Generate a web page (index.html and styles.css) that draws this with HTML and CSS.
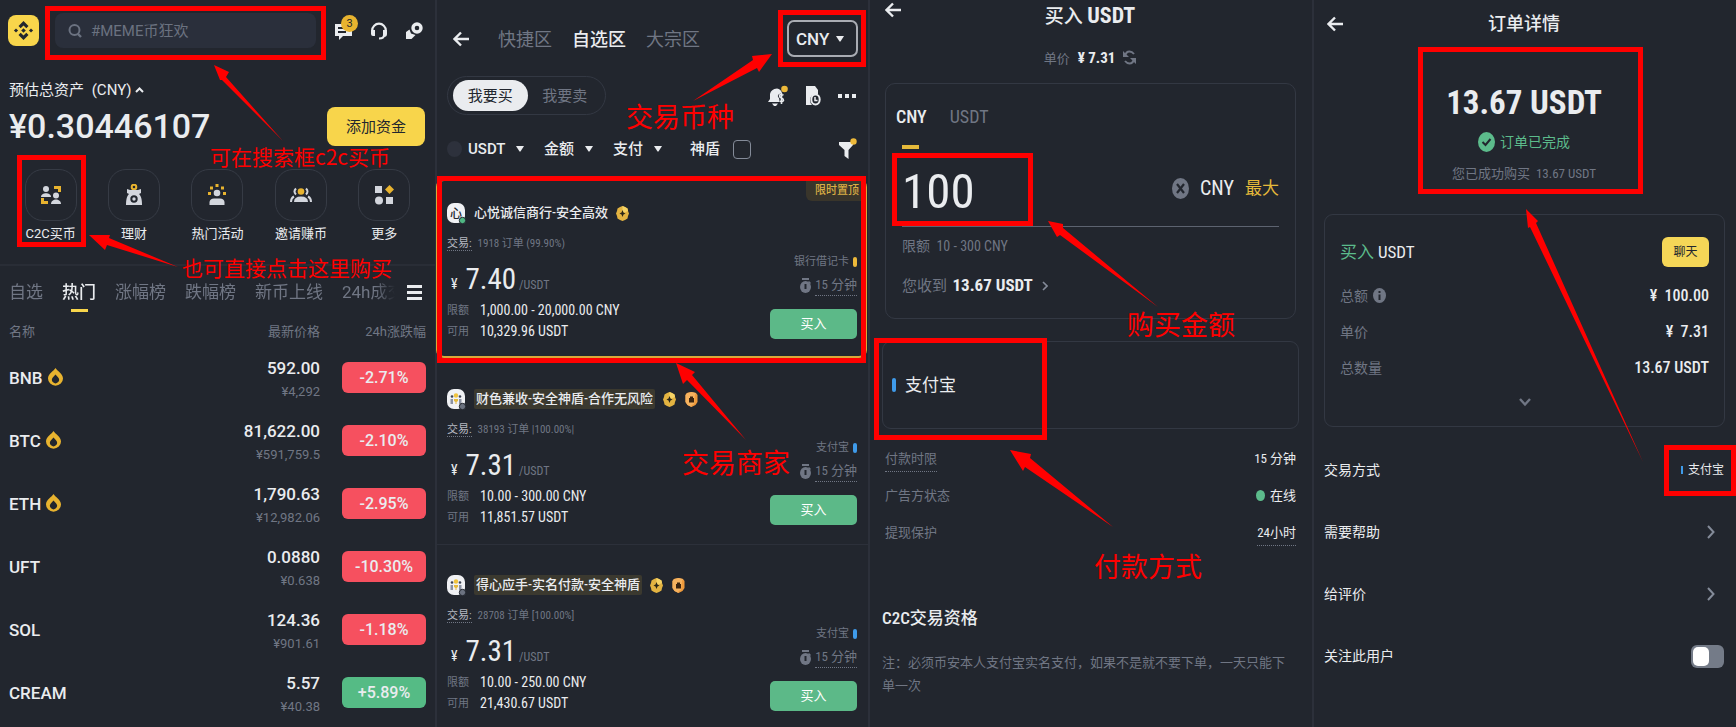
FILE: index.html
```html
<!DOCTYPE html>
<html lang="zh-CN">
	<head>
		<meta charset="UTF-8">
		<meta name="viewport" content="width=device-width, initial-scale=1.0">
		<title>C2C买币教程</title>
		<link rel="stylesheet" href="styles.css">
	</head>
	<body>
		<!-- Shared icons -->
		<svg class="sprite" width="0" height="0" aria-hidden="true">
			<symbol id="back" viewBox="0 0 16 16"><path d="M16 8H2M8 1.5L1.5 8L8 14.5" fill="none" stroke="#eaecef" stroke-width="2.4"/></symbol>
			<symbol id="flame" viewBox="0 0 15 18"><path fill="#e8b32f" fill-rule="evenodd" d="M7.500 0C9 3 15 5.500 15 10.500A7.500 7.200 0 0 1 0 10.500C0 5.500 6 3 7.500 0ZM7.500 6.500L4.800 9.500A3.500 3.500 0 1 0 10.200 9.500Z"/></symbol>
			<symbol id="caret" viewBox="0 0 8 6"><path d="M0 0H8L4.500 5.500H3.500Z" fill="#eaecef"/></symbol>
			<symbol id="watch" viewBox="0 0 11 15"><path d="M2 0H9V2H2Z" fill="#707684"/><path d="M9 3L11 5L10 6L8 4Z" fill="#707684"/><ellipse cx="5.500" cy="9" rx="5.500" ry="6" fill="#707684"/><path d="M4.500 6H6.500V11H4.500Z" fill="#22262e"/></symbol>
			<symbol id="verified" viewBox="0 0 13 15"><path d="M6.500 0L9 1L11.500 2.500L12 5L13 7.500L12 10L11.500 12.500L9 14L6.500 15L4 14L1.500 12.500L1 10L0 7.500L1 5L1.500 2.500L4 1Z" fill="#e3b341"/><path d="M6.500 0L9 1L11.500 2.500L12 5L6.500 7.500Z" fill="#f6d365"/><path d="M6.500 4L7.500 6.500L9.500 7.500L7.500 8.500L6.500 11L5.500 8.500L3.500 7.500L5.500 6.500Z" fill="#2b2618"/></symbol>
			<symbol id="shield" viewBox="0 0 13 15"><path d="M2 1L6.500 0L11 1L12.500 3V10L10.500 13L6.500 15L2.500 13L.5 10V3Z" fill="#ef9a3c"/><path d="M2 1L6.500 0L11 1L10 3L9 12L6.500 13V15L2.500 13L.5 10V3Z" fill="#f6b25f"/><path d="M4 6H5V4.500H8V6H9V10.500H4Z" fill="#3a2410"/></symbol>
			<symbol id="people" viewBox="0 0 19 21">
				<rect width="18" height="20" rx="7" fill="#f0f1f4"/>
				<circle cx="5" cy="7.500" r="1.300" fill="#3b4252"/><circle cx="13" cy="7.500" r="1.300" fill="#3b4252"/><circle cx="9" cy="6.500" r="2.200" fill="#f0c33c"/>
				<path d="M3.500 10H6V15H3.500ZM12 10H14.500V15H12Z" fill="#8b92a3"/><path d="M7 10H11V12L9.500 13V15H8.500V13L7 12Z" fill="#e5b93a"/>
				<circle cx="15.500" cy="17.500" r="3.200" fill="#6b7280" stroke="#22262e"/>
			</symbol>
		</svg>

		<main class="board">
			<!-- Home -->
			<section class="panel home">
				<header class="topbar">
					<svg class="logo" viewBox="0 0 31 31" role="img" aria-label="Binance">
						<rect width="31" height="31" rx="8" fill="#f8d54b"/>
						<g fill="#22262e"><path d="M15.500 6L20.500 11L18.300 13.200L15.500 10.400L12.700 13.200L10.500 11Z"/><path d="M15.500 25L20.500 20L18.300 17.800L15.500 20.600L12.700 17.800L10.500 20Z"/><path d="M15.500 13.200L17.800 15.500L15.500 17.800L13.200 15.500Z"/><path d="M8 13.400L10.100 15.500L8 17.600L5.900 15.500Z"/><path d="M23 13.400L25.100 15.500L23 17.600L20.900 15.500Z"/></g>
					</svg>
					<label class="search">
						<svg width="14" height="14" viewBox="0 0 14 14"><circle cx="6.500" cy="6" r="5" fill="none" stroke="#6b7280" stroke-width="2"/><path d="M10 10L13 13" stroke="#6b7280" stroke-width="2.400"/></svg>
						<input type="search" placeholder="#MEME币狂欢" aria-label="搜索">
					</label>
					<nav class="top-icons">
						<a href="#messages" class="messages" aria-label="消息">
							<svg width="18" height="18" viewBox="0 0 18 18"><path fill="#eaecef" fill-rule="evenodd" d="M0 2H17V14H8L4 18V14H0ZM3 5H14V7H3ZM3 9H11V11H3Z"/></svg>
							<span class="count">3</span>
						</a>
						<a href="#support" aria-label="客服"><svg width="18" height="18" viewBox="0 0 18 18"><path d="M2.200 10V8.500A6.800 6.800 0 0 1 15.800 8.500V10" fill="none" stroke="#eaecef" stroke-width="2.200"/><path d="M1 8H5V14H3A2 2 0 0 1 1 12ZM13 8H17V12A3 3 0 0 1 14 15H13Z" fill="#eaecef"/><path d="M14 13C14 16 12 16.500 9 16.500" fill="none" stroke="#eaecef" stroke-width="2"/></svg></a>
						<a href="#pay" aria-label="支付"><svg width="18" height="18" viewBox="0 0 18 18"><circle cx="12" cy="6" r="4" fill="none" stroke="#eaecef" stroke-width="3.400"/><path d="M1 10L4.500 7.500L6 11.500L10.500 13L6.500 17H1Z" fill="#eaecef"/></svg></a>
					</nav>
				</header>

				<div class="balance">
					<div>
						<p class="balance-label">预估总资产 <span>(CNY)</span>
							<svg width="9" height="6" viewBox="0 0 9 6"><path d="M1 5L4.500 1.500L8 5" fill="none" stroke="#eaecef" stroke-width="2"/></svg>
						</p>
						<p class="balance-value">¥0.30446107</p>
					</div>
					<button class="deposit" type="button">添加资金</button>
				</div>

				<nav class="shortcuts">
					<a href="#c2c"><span class="tile"><svg width="22" height="22" viewBox="0 0 22 22"><g fill="#d3d6dd"><circle cx="6" cy="5" r="3"/><path d="M1 13C1 8 11 8 11 13Z"/><circle cx="16" cy="11.500" r="3"/><path d="M11 20C11 14 21 14 21 20Z"/></g><path d="M14 2H21V8H18V5H14ZM1 14H4V17H8V20H1Z" fill="#e8b32f"/></svg></span>C2C买币</a>
					<a href="#earn"><span class="tile"><svg width="22" height="22" viewBox="0 0 22 22"><circle cx="11" cy="3" r="2.300" fill="none" stroke="#e8b32f" stroke-width="2"/><path d="M4 5L7 6H15L18 5V9L16 10C18 12 19 15 19 21H3C3 15 4 12 6 10L4 9Z" fill="#d3d6dd"/><circle cx="11" cy="15" r="2.700" fill="#d3d6dd" stroke="#22262e" stroke-width="2"/></svg></span>理财</a>
					<a href="#events"><span class="tile"><svg width="22" height="22" viewBox="0 0 22 22"><g fill="#e8b32f"><path d="M9.500 0H12.500V3H9.500ZM4 2.500H7V5.500H4ZM15 2.500H18V5.500H15ZM2 8H5V11H2ZM17 8H20V11H17Z"/></g><circle cx="11" cy="9" r="3.300" fill="#d3d6dd"/><path d="M3.500 21V18Q4 14.500 8 14.500H14Q18 14.500 18.500 18V21Z" fill="#d3d6dd"/></svg></span>热门活动</a>
					<a href="#invite"><span class="tile"><svg width="24" height="22" viewBox="0 0 24 22"><circle cx="12" cy="7.500" r="3.300" fill="#e8b32f"/><path d="M5 18Q5 12.500 12 12.500T19 18Z" fill="#d3d6dd"/><g fill="none" stroke="#d3d6dd" stroke-width="2"><path d="M7 4.500Q4 7.500 7 10.500M17 4.500Q20 7.500 17 10.500M5 12.500Q2 14 2 18M19 12.500Q22 14 22 18"/></g></svg></span>邀请赚币</a>
					<a href="#more"><span class="tile"><svg width="22" height="22" viewBox="0 0 22 22"><path d="M2 2H9V9H2ZM13 13H20V20H13Z" fill="#d3d6dd"/><circle cx="6" cy="16.500" r="4" fill="#d3d6dd"/><path d="M16.500 1L21 5.500L16.500 10L12 5.500Z" fill="#e8b32f"/></svg></span>更多</a>
				</nav>

				<div class="market-bar">
					<div class="market-tabs">
						<button type="button">自选</button>
						<button type="button" class="active">热门</button>
						<button type="button">涨幅榜</button>
						<button type="button">跌幅榜</button>
						<button type="button">新币上线</button>
						<button type="button">24h成交</button>
					</div>
					<button type="button" class="menu" aria-label="全部榜单"><i></i><i></i><i></i></button>
				</div>

				<table class="market">
					<thead>
						<tr><th>名称</th><th>最新价格</th><th>24h涨跌幅</th></tr>
					</thead>
					<tbody>
						<tr><td class="coin">BNB<svg width="15" height="18"><use href="#flame"/></svg></td><td class="price">592.00<small>¥4,292</small></td><td><span class="change">-2.71%</span></td></tr>
						<tr><td class="coin">BTC<svg width="15" height="18"><use href="#flame"/></svg></td><td class="price">81,622.00<small>¥591,759.5</small></td><td><span class="change">-2.10%</span></td></tr>
						<tr><td class="coin">ETH<svg width="15" height="18"><use href="#flame"/></svg></td><td class="price">1,790.63<small>¥12,982.06</small></td><td><span class="change">-2.95%</span></td></tr>
						<tr><td class="coin">UFT</td><td class="price">0.0880<small>¥0.638</small></td><td><span class="change">-10.30%</span></td></tr>
						<tr><td class="coin">SOL</td><td class="price">124.36<small>¥901.61</small></td><td><span class="change">-1.18%</span></td></tr>
						<tr><td class="coin">CREAM</td><td class="price">5.57<small>¥40.38</small></td><td><span class="change up">+5.89%</span></td></tr>
					</tbody>
				</table>

				<svg class="marks" aria-hidden="true">
					<rect x="47.500" y="8.500" width="276" height="49"/>
					<rect x="19.500" y="157.500" width="64" height="87"/>
					<path d="M214 65L229 72L226 77L283 141L222 80L220 80Z"/>
					<path d="M89 235L110 235L109 238L178 267L107 245L105 250Z"/>
				</svg>
				<p class="note-text small note-search">可在搜索框c2c买币</p>
				<p class="note-text small note-direct">也可直接点击这里购买</p>
			</section>

			<!-- C2C offers -->
			<section class="panel offers">
				<header class="zone-bar">
					<button type="button" aria-label="返回"><svg width="16" height="16"><use href="#back"/></svg></button>
					<nav class="zones">
						<a href="#express">快捷区</a>
						<a href="#select" class="active">自选区</a>
						<a href="#block">大宗区</a>
					</nav>
					<label class="currency"><select aria-label="币种"><option>CNY</option></select><svg width="8" height="6"><use href="#caret"/></svg></label>
				</header>

				<div class="side-bar">
					<div class="segment">
						<button type="button" class="active">我要买</button>
						<button type="button">我要卖</button>
					</div>
					<div class="tools">
						<button type="button" aria-label="提醒"><svg width="20" height="22" viewBox="0 0 20 22"><path d="M0 17L2 14V9Q3 4 9 3.500Q13 4 14 8Q9 9 10 12Q12 13 11 17ZM4 18.500H10L8 21H6Z" fill="#eaecef"/><path d="M15.500 10Q11.500 8.500 11.500 11Q11.500 12.500 13.500 13T15.500 15.500Q14.500 17.500 11.500 16M13.500 8V19" fill="none" stroke="#eaecef" stroke-width="1.600"/><circle cx="16.500" cy="4" r="3.300" fill="#edb93a"/></svg></button>
						<button type="button" aria-label="订单"><svg width="16" height="20" viewBox="0 0 16 20"><path d="M1 0H10L13 4V8Q5 8 5 14Q5 17 7 19H1Z" fill="#eaecef"/><ellipse cx="10.500" cy="13.500" rx="4.200" ry="5" fill="none" stroke="#eaecef" stroke-width="2"/><path d="M10 11V14.500H12.500" fill="none" stroke="#eaecef" stroke-width="1.500"/></svg></button>
						<button type="button" aria-label="更多"><svg width="18" height="6" viewBox="0 0 18 6"><path d="M0 1H4V5H0ZM7 1H11V5H7ZM14 1H18V5H14Z" fill="#eaecef"/></svg></button>
					</div>
				</div>

				<div class="filters">
					<i class="coin-dot"></i>
					<label><select aria-label="币"><option>USDT</option></select><svg width="8" height="6"><use href="#caret"/></svg></label>
					<label><select aria-label="金额"><option>金额</option></select><svg width="8" height="6"><use href="#caret"/></svg></label>
					<label><select aria-label="支付"><option>支付</option></select><svg width="8" height="6"><use href="#caret"/></svg></label>
					<label class="guard">神盾<input type="checkbox"></label>
					<button type="button" class="funnel" aria-label="筛选"><svg width="18" height="22" viewBox="0 0 18 22"><path d="M0 4H14V7L9.500 12V21L5.500 18V12L0 7Z" fill="#eaecef"/><circle cx="14.500" cy="3.500" r="3.200" fill="#edb93a"/></svg></button>
				</div>

				<article class="offer pinned">
					<span class="tag">限时置顶</span>
					<h3 class="merchant">
						<svg width="19" height="21" viewBox="0 0 19 21"><rect width="18" height="20" rx="7" fill="#f0f1f4"/><text x="3" y="15" class="avatar-char">心</text><circle cx="15.500" cy="17.500" r="3.200" fill="#4fb783" stroke="#22262e"/></svg>
						<span>心悦诚信商行-安全高效</span>
						<svg width="13" height="15"><use href="#verified"/></svg>
					</h3>
					<p class="trades"><span class="dotted">交易:</span>1918 订单 (99.90%)</p>
					<div class="offer-body">
						<div>
							<p class="unit"><small>¥</small>7.40<em>/USDT</em></p>
							<dl><dt>限额</dt><dd>1,000.00 - 20,000.00 CNY</dd><dt>可用</dt><dd>10,329.96 USDT</dd></dl>
						</div>
						<div class="terms">
							<p class="method card">银行借记卡</p>
							<p class="limit"><svg width="11" height="15"><use href="#watch"/></svg><span class="dotted">15 分钟</span></p>
							<button type="button" class="buy">买入</button>
						</div>
					</div>
				</article>

				<article class="offer">
					<h3 class="merchant">
						<svg width="19" height="21"><use href="#people"/></svg>
						<span class="marked">财色兼收-安全神盾-合作无风险</span>
						<svg width="13" height="15"><use href="#verified"/></svg>
						<svg width="13" height="15"><use href="#shield"/></svg>
					</h3>
					<p class="trades"><span class="dotted">交易:</span>38193 订单 |100.00%|</p>
					<div class="offer-body">
						<div>
							<p class="unit"><small>¥</small>7.31<em>/USDT</em></p>
							<dl><dt>限额</dt><dd>10.00 - 300.00 CNY</dd><dt>可用</dt><dd>11,851.57 USDT</dd></dl>
						</div>
						<div class="terms">
							<p class="method">支付宝</p>
							<p class="limit"><svg width="11" height="15"><use href="#watch"/></svg><span class="dotted">15 分钟</span></p>
							<button type="button" class="buy">买入</button>
						</div>
					</div>
				</article>

				<article class="offer">
					<h3 class="merchant">
						<svg width="19" height="21"><use href="#people"/></svg>
						<span class="marked">得心应手-实名付款-安全神盾</span>
						<svg width="13" height="15"><use href="#verified"/></svg>
						<svg width="13" height="15"><use href="#shield"/></svg>
					</h3>
					<p class="trades"><span class="dotted">交易:</span>28708 订单 [100.00%]</p>
					<div class="offer-body">
						<div>
							<p class="unit"><small>¥</small>7.31<em>/USDT</em></p>
							<dl><dt>限额</dt><dd>10.00 - 250.00 CNY</dd><dt>可用</dt><dd>21,430.67 USDT</dd></dl>
						</div>
						<div class="terms">
							<p class="method">支付宝</p>
							<p class="limit"><svg width="11" height="15"><use href="#watch"/></svg><span class="dotted">15 分钟</span></p>
							<button type="button" class="buy">买入</button>
						</div>
					</div>
				</article>

				<svg class="marks" aria-hidden="true">
					<rect x="345.500" y="12.500" width="83" height="52"/>
					<rect x="4.500" y="178.500" width="424" height="182"/>
					<path d="M337 54L317 56L318 60L258 101L322 68L324 72Z"/>
					<path d="M241 363L260 372L257 375L311 440L252 380L248 384Z"/>
				</svg>
				<p class="note-text note-currency">交易币种</p>
				<p class="note-text note-merchant">交易商家</p>
			</section>

			<!-- Buy form -->
			<section class="panel purchase">
				<header class="title-bar">
					<button type="button" aria-label="返回"><svg width="16" height="16"><use href="#back"/></svg></button>
					<h2>买入 <b>USDT</b></h2>
				</header>
				<p class="rate">单价 <b>¥ 7.31</b>
					<svg width="13" height="15" viewBox="0 0 13 15"><path d="M2 6Q3 1.500 6.500 1.500Q9 1.500 11 4M11 9Q10 13.500 6.500 13.500Q4 13.500 2 11" fill="none" stroke="#707684" stroke-width="2"/><path d="M0 1V7H6ZM13 14V8H7Z" fill="#707684"/></svg>
				</p>

				<form class="amount-card">
					<div class="amount-tabs">
						<button type="button" class="active">CNY</button>
						<button type="button">USDT</button>
					</div>
					<div class="amount-row">
						<input type="text" value="100" aria-label="金额">
						<button type="reset" aria-label="清除"><svg width="17" height="21" viewBox="0 0 17 21"><ellipse cx="8.500" cy="10.500" rx="8.500" ry="10.500" fill="#707684"/><path d="M5 6L12 15M12 6L5 15" stroke="#22262e" stroke-width="2.200"/></svg></button>
						<span>CNY</span>
						<button type="button" class="max">最大</button>
					</div>
					<p class="range">限额 &nbsp;10 - 300 CNY</p>
					<p class="receive">您收到 <b>13.67 USDT</b>
						<svg width="6" height="10" viewBox="0 0 6 10"><path d="M1 1L5 5L1 9" fill="none" stroke="#848b99" stroke-width="1.600"/></svg>
					</p>
				</form>

				<button type="button" class="pay-card">支付宝</button>

				<dl class="facts">
					<dt><span class="dotted">付款时限</span></dt><dd>15 分钟</dd>
					<dt>广告方状态</dt><dd class="online">在线</dd>
					<dt>提现保护</dt><dd><span class="dotted">24小时</span></dd>
				</dl>

				<h3 class="terms-title">C2C交易资格</h3>
				<p class="terms-text">注：必须币安本人支付宝实名支付，如果不是就不要下单，一天只能下单一次</p>

				<svg class="marks" aria-hidden="true">
					<rect x="26.500" y="155.500" width="136" height="68"/>
					<rect x="8.500" y="340.500" width="168" height="97"/>
					<path d="M180 221L195 224L195 228L290 307L192 235L189 237Z"/>
					<path d="M142 450L163 454L162 458L245 527L157 467L155 471Z"/>
				</svg>
				<p class="note-text note-amount">购买金额</p>
				<p class="note-text note-payment">付款方式</p>
			</section>

			<!-- Order details -->
			<section class="panel order">
				<header class="title-bar">
					<button type="button" aria-label="返回"><svg width="16" height="16"><use href="#back"/></svg></button>
					<h2>订单详情</h2>
				</header>

				<div class="result">
					<p class="result-amount">13.67 USDT</p>
					<p class="result-status"><svg width="17" height="20" viewBox="0 0 17 20"><ellipse cx="8.500" cy="10" rx="8.500" ry="10" fill="#5cbb8b"/><path d="M4.500 10L7.500 13L12.500 7" fill="none" stroke="#22262e" stroke-width="2"/></svg>订单已完成</p>
					<p class="result-note">您已成功购买 &nbsp;13.67 USDT</p>
				</div>

				<div class="order-card">
					<div class="order-head">
						<p><span>买入</span> USDT</p>
						<button type="button" class="chat">聊天</button>
					</div>
					<dl>
						<dt>总额 <svg width="13" height="15" viewBox="0 0 13 15"><ellipse cx="6.500" cy="7.500" rx="6.500" ry="7.500" fill="#707684"/><path d="M5.500 3H7.500V5H5.500ZM5.500 6.500H7.500V12H5.500Z" fill="#22262e"/></svg></dt><dd>¥&nbsp; 100.00</dd>
						<dt>单价</dt><dd>¥&nbsp; 7.31</dd>
						<dt>总数量</dt><dd>13.67 USDT</dd>
					</dl>
					<button type="button" class="expand" aria-label="展开"><svg width="12" height="10" viewBox="0 0 12 10"><path d="M1 2L6 7.500L11 2" fill="none" stroke="#707684" stroke-width="2.400"/></svg></button>
				</div>

				<ul class="actions">
					<li>交易方式<span class="paid-by">支付宝</span></li>
					<li><a href="#help">需要帮助<svg width="8" height="14" viewBox="0 0 8 14"><path d="M1 1L6.500 7L1 13" fill="none" stroke="#848b99" stroke-width="2"/></svg></a></li>
					<li><a href="#rate">给评价<svg width="8" height="14" viewBox="0 0 8 14"><path d="M1 1L6.500 7L1 13" fill="none" stroke="#848b99" stroke-width="2"/></svg></a></li>
					<li><label>关注此用户<input type="checkbox" class="toggle"></label></li>
				</ul>

				<svg class="marks" aria-hidden="true">
					<rect x="108.500" y="49.500" width="220" height="142"/>
					<rect x="354.500" y="447.500" width="67" height="46"/>
					<path d="M214 209L226 221L224 223L331 462L218 227L216 228Z"/>
				</svg>
			</section>
		</main>
	</body>
</html>
```
FILE: styles.css
```css
* {
	box-sizing: border-box;
}

body {
	margin: 0;
	background: #22262e;
	color: #eaecef;
	font-family: Roboto, "Noto Sans CJK SC", sans-serif;
	font-size: 13px;
	line-height: 20px;
}

p, h2, h3, dl, dd, ul {
	margin: 0;
	padding: 0;
	font-weight: 400;
}

button, input, select {
	margin: 0;
	padding: 0;
	border: 0;
	background: none;
	color: inherit;
	font: inherit;
	appearance: none;
}

button svg, a svg {
	display: block;
}

a {
	color: inherit;
	text-decoration: none;
}

.sprite {
	position: absolute;
}

.board {
	display: grid;
	grid-template-columns: 435fr 433fr 444fr 424fr;
	min-height: 100vh;
}

.panel {
	position: relative;
	min-width: 0;
}

.panel + .panel {
	box-shadow: inset 2px 0 #2c303a;
}

.dotted {
	border-bottom: 1px dotted #707684;
}

/* Home */
.topbar {
	display: flex;
	align-items: center;
	height: 61px;
	padding: 0 12px 0 8px;
}

.logo {
	width: 31px;
	height: 31px;
}

.search {
	display: flex;
	flex: 1;
	align-items: center;
	gap: 9px;
	height: 35px;
	margin: 0 19px 0 16px;
	padding: 0 13px;
	border-radius: 8px;
	background: #2a2f3b;
}

.search input {
	flex: 1;
	min-width: 0;
	font-size: 15px;
}

.search input::placeholder {
	color: #6b7280;
}

.top-icons {
	display: flex;
	gap: 17px;
}

.messages {
	position: relative;
}

.count {
	position: absolute;
	top: -7px;
	left: 6px;
	width: 17px;
	border-radius: 9px;
	background: #e8b32f;
	color: #22262e;
	font-size: 11px;
	line-height: 17px;
	text-align: center;
}

.balance {
	display: flex;
	align-items: flex-end;
	justify-content: space-between;
	padding: 19px 10px 0 9px;
}

.balance-label {
	font-size: 15px;
}

.balance-label span {
	margin-left: 4px;
}

.balance-label svg {
	vertical-align: 2px;
}

.balance-value {
	margin-top: 6px;
	font-size: 34px;
	font-weight: 500;
	line-height: 40px;
}

.deposit {
	width: 98px;
	height: 39px;
	border-radius: 8px;
	background: #f8d54b;
	color: #22262e;
	font-size: 15px;
}

.shortcuts {
	display: grid;
	grid-template-columns: repeat(5, 1fr);
	padding: 23px 9px 20px;
	border-bottom: 2px solid #292d36;
	text-align: center;
}

.tile {
	display: flex;
	align-items: center;
	justify-content: center;
	width: 52px;
	height: 52px;
	margin: 0 auto 3px;
	border: 1px solid #363b45;
	border-radius: 18px;
}

.market-bar {
	display: flex;
	align-items: center;
	gap: 12px;
	height: 52px;
	padding: 0 13px 0 9px;
}

.market-tabs {
	display: flex;
	flex: 1;
	gap: 19px;
	overflow: hidden;
	color: #707684;
	font-size: 17px;
	line-height: 52px;
	white-space: nowrap;
	mask-image: linear-gradient(to left, transparent, #000 20px);
}

.market-tabs button {
	flex: none;
}

.market-tabs .active {
	position: relative;
	color: #eaecef;
	font-weight: 500;
}

.market-tabs .active::after {
	content: "";
	position: absolute;
	bottom: 6px;
	left: 50%;
	width: 17px;
	height: 3px;
	margin-left: -8px;
	background: #f8d54b;
}

.menu {
	display: grid;
	gap: 3px;
	width: 15px;
}

.menu i {
	height: 3px;
	background: #eaecef;
}

.market {
	width: 100%;
	border-collapse: collapse;
	text-align: right;
}

.market th {
	height: 28px;
	padding: 0;
	color: #707684;
	font-weight: 400;
}

.market td {
	height: 63px;
	padding: 0;
}

.market th:first-child, .market .coin {
	padding-left: 9px;
	text-align: left;
}

.market th:last-child, .market td:last-child {
	width: 115px;
	padding-right: 9px;
}

.coin, .price {
	font-size: 17px;
	font-weight: 500;
}

.coin svg {
	margin-left: 5px;
	vertical-align: -2px;
}

.market .price {
	padding-top: 5px;
	line-height: 23px;
}

.price small {
	display: block;
	color: #707684;
	font-size: 13px;
	font-weight: 400;
}

.change {
	display: inline-block;
	width: 84px;
	border-radius: 6px;
	background: #f6505f;
	font-size: 16px;
	font-weight: 500;
	line-height: 31px;
	text-align: center;
}

.change.up {
	background: #55bb85;
}

/* C2C offers */
.offers, .purchase, .order {
	font-family: "Roboto Condensed", Roboto, "Noto Sans CJK SC", sans-serif;
}

.zone-bar {
	display: flex;
	align-items: center;
	height: 77px;
	padding: 0 10px 0 18px;
}

.zones {
	display: flex;
	gap: 20px;
	margin-left: 29px;
	padding-top: 2px;
	color: #707684;
	font-size: 18px;
}

.zones .active {
	color: #eaecef;
	font-weight: 500;
}

.currency {
	display: flex;
	align-items: center;
	justify-content: space-between;
	width: 71px;
	height: 37px;
	margin-left: auto;
	padding: 0 12px 0 7px;
	border: 2px solid #a9acb3;
	border-radius: 7px;
	font-family: Roboto, sans-serif;
	font-size: 17px;
	font-weight: 500;
}

.side-bar {
	display: flex;
	align-items: center;
	justify-content: space-between;
	margin-top: -1px;
	padding: 0 12px;
}

.segment {
	display: flex;
	width: 159px;
	height: 39px;
	padding: 3px 3px 3px 5px;
	border: 1px solid #333843;
	border-radius: 20px;
	color: #707684;
	font-size: 15px;
}

.segment button {
	flex: 1;
	border-radius: 16px;
}

.segment .active {
	background: #eaecef;
	color: #22262e;
}

.tools {
	display: flex;
	align-items: center;
	gap: 17px;
}

.filters {
	display: flex;
	align-items: center;
	gap: 20px;
	height: 58px;
	padding: 10px 11px 0 12px;
	font-family: Roboto, "Noto Sans CJK SC", sans-serif;
	font-size: 15px;
	font-weight: 500;
}

.filters label {
	display: flex;
	align-items: center;
	gap: 10px;
}

.coin-dot {
	width: 15px;
	height: 16px;
	margin-right: -14px;
	border-radius: 50%;
	background: #2d313c;
}

.filters .guard {
	gap: 13px;
	margin-left: 8px;
}

.guard input {
	width: 18px;
	height: 19px;
	border: 1px solid #848b99;
	border-radius: 4px;
}

.funnel {
	margin-left: auto;
}

.offer {
	padding: 29px 11px 16px 12px;
	border-bottom: 1px solid #2c303a;
}

.offer:last-of-type {
	padding-bottom: 0;
	border: 0;
}

.pinned {
	position: relative;
	margin: 6px 1px 1px;
	padding: 21px 8px 14px 9px;
	border: 2px solid #d8a93a;
	border-radius: 8px;
}

.tag {
	position: absolute;
	top: 0;
	right: 0;
	padding: 0 6px 0 9px;
	border-radius: 0 6px 0 6px;
	background: #39352b;
	color: #d9ae45;
	font-size: 11px;
	font-weight: 500;
	line-height: 20px;
}

.merchant {
	display: flex;
	align-items: center;
	gap: 8px;
	height: 22px;
	font-size: 13px;
	font-weight: 500;
}

.avatar-char {
	fill: #22262e;
	font-size: 12px;
}

.marked {
	padding: 0 2px;
	border-radius: 2px;
	background: #3b392f;
}

.merchant svg + svg {
	margin-left: 1px;
}

.trades {
	margin-top: 11px;
	color: #707684;
	font-size: 11px;
	line-height: 18px;
}

.trades .dotted {
	margin-right: 6px;
	color: #b7bac2;
}

.offer-body {
	display: flex;
	justify-content: space-between;
}

.unit {
	height: 36px;
	margin: 8px 0 3px 4px;
	font-size: 29px;
	line-height: 36px;
}

.unit small {
	margin-right: 8px;
	font-size: 14px;
	line-height: 16px;
}

.unit em {
	margin-left: 3px;
	color: #707684;
	font-size: 12px;
	font-style: normal;
	line-height: 16px;
}

.offer dl {
	display: grid;
	grid-template-columns: auto 1fr;
	column-gap: 11px;
	line-height: 21px;
}

.offer dt {
	color: #707684;
	font-size: 11px;
}

.offer dd {
	font-size: 14px;
}

.terms {
	display: flex;
	flex-direction: column;
	align-items: flex-end;
	color: #707684;
}

.method {
	display: flex;
	align-items: center;
	gap: 4px;
	font-size: 11px;
	line-height: 18px;
}

.method::after {
	content: "";
	width: 4px;
	height: 10px;
	border-radius: 2px;
	background: #3f9bea;
}

.method.card::after {
	background: #edb93a;
}

.limit {
	display: flex;
	align-items: center;
	gap: 4px;
	margin-top: 4px;
	font-size: 13px;
}

.buy {
	width: 87px;
	height: 30px;
	margin-top: 13px;
	border-radius: 5px;
	background: #5cb988;
	color: #fff;
}

/* Buy form */
.title-bar {
	display: grid;
	grid-template-columns: 1fr auto 1fr;
	align-items: center;
	height: 48px;
	padding: 0 15px;
}

.title-bar h2 {
	font-size: 18px;
	font-weight: 500;
}

.purchase .title-bar {
	align-items: start;
	height: 32px;
	padding: 2px 17px;
}

.purchase h2 {
	font-size: 19px;
	line-height: 28px;
}

.purchase h2 b {
	font-size: 22px;
}

.rate {
	height: 20px;
	margin: 16px 0 15px;
	color: #707684;
	text-align: center;
}

.rate b {
	margin: 0 5px;
	color: #eaecef;
	font-size: 15px;
}

.rate svg {
	vertical-align: -2px;
}

.amount-card {
	margin: 0 16px 0 17px;
	padding: 0 16px 21px;
	border: 1px solid #333843;
	border-radius: 10px;
}

.amount-tabs {
	display: flex;
	gap: 23px;
	margin-left: -6px;
	color: #707684;
	font-size: 18px;
	line-height: 66px;
}

.amount-tabs .active {
	position: relative;
	color: #eaecef;
	font-weight: 500;
}

.amount-tabs .active::after {
	content: "";
	position: absolute;
	bottom: 1px;
	left: 6px;
	width: 17px;
	height: 4px;
	background: #e5b93a;
}

.amount-row {
	display: flex;
	align-items: center;
	gap: 11px;
	height: 77px;
	border-bottom: 1px solid #5d6370;
	font-size: 20px;
}

.amount-row input {
	flex: 1;
	min-width: 0;
	height: 66px;
	padding-top: 6px;
	font-size: 49px;
}

.amount-row .max {
	color: #e5b93a;
	font-size: 17px;
}

.range {
	margin-top: 9px;
	color: #707684;
	font-size: 14px;
}

.receive {
	height: 24px;
	margin-top: 17px;
	color: #707684;
	font-size: 15px;
	line-height: 24px;
}

.receive b {
	margin: 0 6px 0 2px;
	color: #eaecef;
	font-size: 17px;
}

.pay-card {
	display: flex;
	align-items: center;
	gap: 9px;
	width: calc(100% - 27px);
	height: 88px;
	margin: 22px 13px 0 14px;
	padding-left: 9px;
	border: 1px solid #333843;
	border-radius: 9px;
	font-size: 17px;
}

.pay-card::before {
	content: "";
	width: 4px;
	height: 14px;
	border-radius: 2px;
	background: #3f9bea;
}

.facts {
	display: grid;
	grid-template-columns: 1fr auto;
	margin: 11px 16px 0 17px;
	color: #eaecef;
	line-height: 37px;
}

.facts dt {
	color: #707684;
}

.facts dd {
	text-align: right;
}

.facts .dotted {
	display: inline-block;
	line-height: 24px;
}

.online::before {
	content: "";
	display: inline-block;
	width: 9px;
	height: 11px;
	margin-right: 5px;
	border-radius: 50%;
	background: #5cbb8b;
	vertical-align: -1px;
}

.terms-title {
	margin: 55px 14px 0;
	font-size: 17px;
	font-weight: 500;
	line-height: 24px;
}

.terms-text {
	margin: 21px 16px 0 14px;
	color: #707684;
	line-height: 23px;
}

/* Order details */
.result {
	margin-top: 35px;
	text-align: center;
}

.result-amount {
	font-size: 33px;
	font-weight: 700;
	line-height: 40px;
}

.result-status {
	display: flex;
	align-items: center;
	justify-content: center;
	gap: 5px;
	margin-top: 8px;
	color: #5cbb8b;
	font-size: 14px;
	line-height: 22px;
}

.result-note {
	margin-top: 11px;
	color: #707684;
}

.order-card {
	margin: 30px 11px 0 12px;
	padding: 22px 15px 8px;
	border: 1px solid #333843;
	border-radius: 9px;
}

.order-head {
	display: flex;
	align-items: center;
	justify-content: space-between;
	font-size: 17px;
}

.order-head span {
	color: #5cbb8b;
}

.chat {
	width: 47px;
	height: 30px;
	border-radius: 6px;
	background: #f5d657;
	color: #22262e;
	font-size: 12px;
}

.order-card dl {
	display: grid;
	grid-template-columns: 1fr auto;
	margin-top: 11px;
	font-size: 14px;
	line-height: 36px;
}

.order-card dt {
	color: #707684;
}

.order-card dt svg {
	margin-left: 2px;
	vertical-align: -2px;
}

.order-card dd {
	font-size: 16px;
	font-weight: 500;
	text-align: right;
}

.expand {
	display: block;
	height: 32px;
	margin: 0 auto;
}

.actions {
	margin: 12px 12px 0;
	list-style: none;
	font-size: 14px;
}

.actions li, .actions a, .actions label {
	display: flex;
	flex: 1;
	align-items: center;
	justify-content: space-between;
	height: 62px;
}

.actions a {
	padding-right: 9px;
}

.paid-by {
	display: flex;
	align-items: center;
	gap: 5px;
	font-size: 12px;
}

.paid-by::before {
	content: "";
	width: 2px;
	height: 8px;
	background: #3f9bea;
}

.toggle {
	width: 33px;
	height: 23px;
	padding: 2px;
	border-radius: 6px;
	background: #747b88;
}

.toggle::before {
	content: "";
	display: block;
	width: 16px;
	height: 19px;
	border-radius: 5px;
	background: #fff;
}

.toggle:checked::before {
	margin-left: auto;
}

/* Red tutorial marks drawn over the screens */
.marks {
	position: absolute;
	top: 0;
	left: 0;
	width: 100%;
	height: 100%;
	fill: #f00;
	pointer-events: none;
}

.marks rect {
	fill: none;
	stroke: #f00;
	stroke-width: 5px;
}

.note-text {
	position: absolute;
	color: #f00;
	font-family: "Noto Sans CJK SC", sans-serif;
	font-size: 27px;
	line-height: 30px;
	pointer-events: none;
	white-space: nowrap;
}

.note-text.small {
	font-size: 21px;
}

.note-search {
	top: 141px;
	left: 210px;
}

.note-direct {
	top: 252px;
	left: 182px;
}

.note-currency {
	top: 101px;
	left: 191px;
}

.note-merchant {
	top: 447px;
	left: 247px;
}

.note-amount {
	top: 309px;
	left: 259px;
}

.note-payment {
	top: 551px;
	left: 226px;
}
```
